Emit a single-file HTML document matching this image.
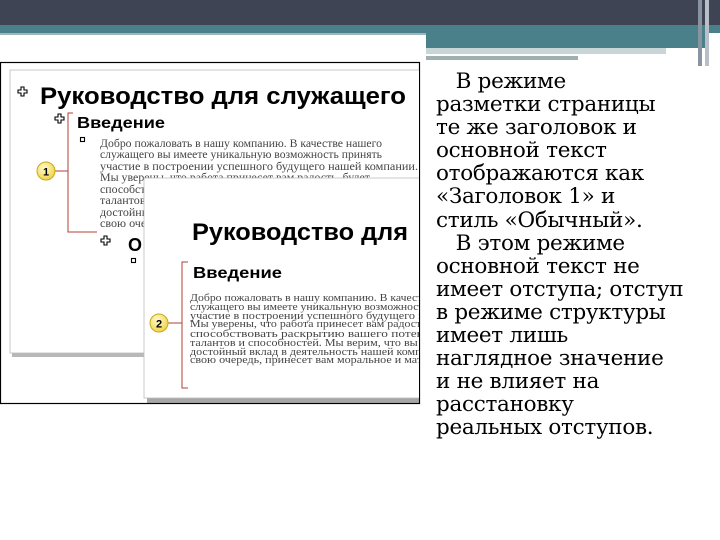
<!DOCTYPE html>
<html><head><meta charset="utf-8"><style>
html,body{margin:0;padding:0;background:#fff;width:720px;height:540px;overflow:hidden;position:relative}
.t{position:absolute;left:436px;top:70px;font-family:"DejaVu Serif","Liberation Serif",serif;font-size:21.5px;line-height:23.1px;color:#000;white-space:nowrap;letter-spacing:-0.3px}
</style></head><body>
<svg width="720" height="540" style="position:absolute;left:0;top:0" xmlns="http://www.w3.org/2000/svg">
<defs>
<clipPath id="c"><rect x="0" y="60" width="419" height="350"/></clipPath>
<radialGradient id="y" cx="40%" cy="35%" r="65%"><stop offset="0" stop-color="#fffbd0"/><stop offset="1" stop-color="#f0d64a"/></radialGradient>
</defs>
<rect x="0" y="0" width="720" height="25" fill="#3f4454"/>
<rect x="0" y="25" width="720" height="8" fill="#4a8089"/>
<rect x="0" y="33" width="426" height="2" fill="#9fb6ba"/>
<rect x="426" y="33" width="280" height="15" fill="#4a8089"/>
<rect x="426" y="48" width="240" height="6" fill="#c9d6d8"/>
<rect x="426" y="54" width="240" height="2" fill="#fff"/>
<rect x="426" y="56" width="152" height="4" fill="#9fb0b3"/>
<rect x="698" y="0" width="4" height="66" fill="#8a93a0"/>
<rect x="705" y="0" width="4" height="66" fill="#b8bfc8"/>
<rect x="0.5" y="62.5" width="419" height="341" fill="#fff" stroke="#000" stroke-width="1.2"/>
<g clip-path="url(#c)" font-family="Liberation Sans,sans-serif">
<rect x="12" y="74" width="420" height="283" fill="#888" opacity="0.6"/>
<rect x="10" y="70" width="420" height="283" fill="#fff" stroke="#bbb" stroke-width="0.8"/>
<g fill="#fff" stroke="#000" stroke-width="1.1">
<path d="M18 90h3v-3h3v3h3v3h-3v3h-3v-3h-3z"/>
<path d="M55 117h3v-3h3v3h3v3h-3v3h-3v-3h-3z"/>
<path d="M101 239h3v-3h3v3h3v3h-3v3h-3v-3h-3z"/>
<rect x="80.5" y="137.5" width="4" height="4"/>
<rect x="131.5" y="258.5" width="4" height="4"/>
</g>
<text x="40" y="104" font-weight="bold" font-size="24" textLength="366" lengthAdjust="spacingAndGlyphs" fill="#000">Руководство для служащего</text>
<text x="77" y="128" font-weight="bold" font-size="16" textLength="88" lengthAdjust="spacingAndGlyphs" fill="#000">Введение</text>
<g font-family="Liberation Serif,serif" font-size="11.5" fill="#444">
<text x="100" y="147" textLength="282" lengthAdjust="spacingAndGlyphs">Добро пожаловать в нашу компанию. В качестве нашего</text>
<text x="100" y="158" textLength="282" lengthAdjust="spacingAndGlyphs">служащего вы имеете уникальную возможность принять</text>
<text x="100" y="170" textLength="318" lengthAdjust="spacingAndGlyphs">участие в построении успешного будущего нашей компании.</text>
<text x="100" y="181" textLength="270" lengthAdjust="spacingAndGlyphs">Мы уверены, что работа принесет вам радость, будет</text>
<text x="100" y="193" textLength="240" lengthAdjust="spacingAndGlyphs">способствовать раскрытию вашего потенциала,</text>
<text x="100" y="204" textLength="270" lengthAdjust="spacingAndGlyphs">талантов и способностей. Мы верим, что вы внесете</text>
<text x="100" y="216" textLength="300" lengthAdjust="spacingAndGlyphs">достойный вклад в деятельность нашей компании, а она, в</text>
<text x="100" y="227" textLength="285" lengthAdjust="spacingAndGlyphs">свою очередь, принесет вам моральное и материальное</text>
</g>
<text x="128" y="251" font-weight="bold" font-size="18" fill="#000">О</text>
<path d="M73 113H68V232H97M55 171H68" fill="none" stroke="#b04030" stroke-width="1"/>
<circle cx="46" cy="171" r="9" fill="url(#y)" stroke="#c8a820"/>
<text x="46" y="175.5" text-anchor="middle" font-weight="bold" font-size="11">1</text>
<rect x="147" y="183" width="280" height="220" fill="#777" opacity="0.65"/>
<rect x="144" y="178" width="280" height="220" fill="#fff" stroke="#bbb" stroke-width="0.8"/>
<text x="192" y="240" font-weight="bold" font-size="24" textLength="216" lengthAdjust="spacingAndGlyphs" fill="#000">Руководство для</text>
<text x="193" y="278" font-weight="bold" font-size="16" textLength="89" lengthAdjust="spacingAndGlyphs" fill="#000">Введение</text>
<g font-family="Liberation Serif,serif" font-size="11" fill="#444">
<text x="190" y="301" textLength="282" lengthAdjust="spacingAndGlyphs">Добро пожаловать в нашу компанию. В качестве нашего</text>
<text x="190" y="310" textLength="282" lengthAdjust="spacingAndGlyphs">служащего вы имеете уникальную возможность принять</text>
<text x="190" y="319" textLength="318" lengthAdjust="spacingAndGlyphs">участие в построении успешного будущего нашей компании.</text>
<text x="190" y="327" textLength="270" lengthAdjust="spacingAndGlyphs">Мы уверены, что работа принесет вам радость, будет</text>
<text x="190" y="337" textLength="270" lengthAdjust="spacingAndGlyphs">способствовать раскрытию вашего потенциала,</text>
<text x="190" y="346" textLength="270" lengthAdjust="spacingAndGlyphs">талантов и способностей. Мы верим, что вы внесете</text>
<text x="190" y="355" textLength="300" lengthAdjust="spacingAndGlyphs">достойный вклад в деятельность нашей компании, а она, в</text>
<text x="190" y="363" textLength="285" lengthAdjust="spacingAndGlyphs">свою очередь, принесет вам моральное и материальное</text>
</g>
<path d="M188 262H182V388H188M168 323H182" fill="none" stroke="#b04030" stroke-width="1"/>
<circle cx="159" cy="323" r="9" fill="url(#y)" stroke="#c8a820"/>
<text x="159" y="327.5" text-anchor="middle" font-weight="bold" font-size="11">2</text>
</g>
</svg>
<div class="t">&nbsp;&nbsp;&nbsp;В режиме<br>разметки страницы<br>те же заголовок и<br>основной текст<br>отображаются как<br>«Заголовок 1» и<br>стиль «Обычный».<br>&nbsp;&nbsp;&nbsp;В этом режиме<br>основной текст не<br>имеет отступа; отступ<br>в режиме структуры<br>имеет лишь<br>наглядное значение<br>и не влияет на<br>расстановку<br>реальных отступов.</div>
</body></html>
